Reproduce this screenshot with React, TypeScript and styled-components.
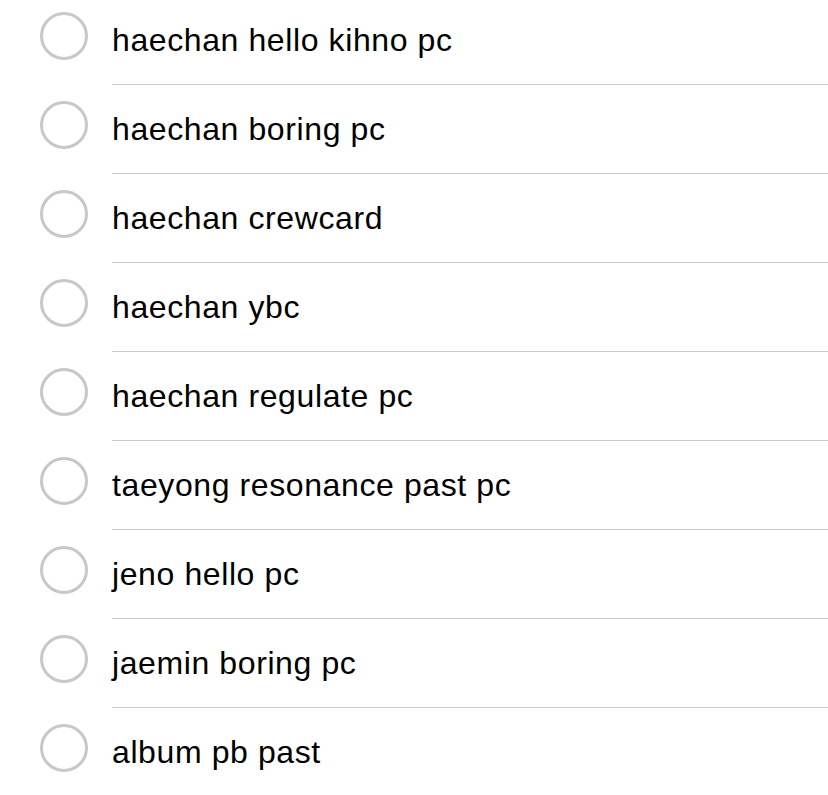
import React from "react";
import styled, { createGlobalStyle } from "styled-components";

const Global = createGlobalStyle`
  html, body { margin: 0; padding: 0; background: #ffffff; }
  body { font-family: "Liberation Sans", Arial, sans-serif; overflow: hidden; }
`;

const List = styled.div`
  display: flex;
  flex-direction: column;
  margin-top: -4px;
  width: 828px;
`;

const Row = styled.div`
  display: flex;
  height: 89px;
`;

const RadioCell = styled.div`
  width: 112px;
  flex: none;
  box-sizing: border-box;
  padding: 16px 0 0 40px;
`;

const Radio = styled.div<{ $checked?: boolean }>`
  width: 48px;
  height: 48px;
  box-sizing: border-box;
  border-radius: 50%;
  border: 3px solid ${(p) => (p.$checked ? "#007aff" : "#c8c8c8")};
`;

const Label = styled.div<{ $last?: boolean }>`
  flex: 1;
  box-sizing: border-box;
  padding-top: 26px;
  font-size: 32px;
  line-height: 37px;
  letter-spacing: 0.6px;
  color: #000000;
  border-bottom: 1px solid ${(p) => (p.$last ? "transparent" : "#c8c8c8")};
  white-space: nowrap;
`;

const items = [
  "haechan hello kihno pc",
  "haechan boring pc",
  "haechan crewcard",
  "haechan ybc",
  "haechan regulate pc",
  "taeyong resonance past pc",
  "jeno hello pc",
  "jaemin boring pc",
  "album pb past",
];

export default function App() {
  return (
    <>
      <Global />
      <List>
        {items.map((t, i) => (
          <Row key={t}>
            <RadioCell>
              <Radio />
            </RadioCell>
            <Label $last={i === items.length - 1}>{t}</Label>
          </Row>
        ))}
      </List>
    </>
  );
}
